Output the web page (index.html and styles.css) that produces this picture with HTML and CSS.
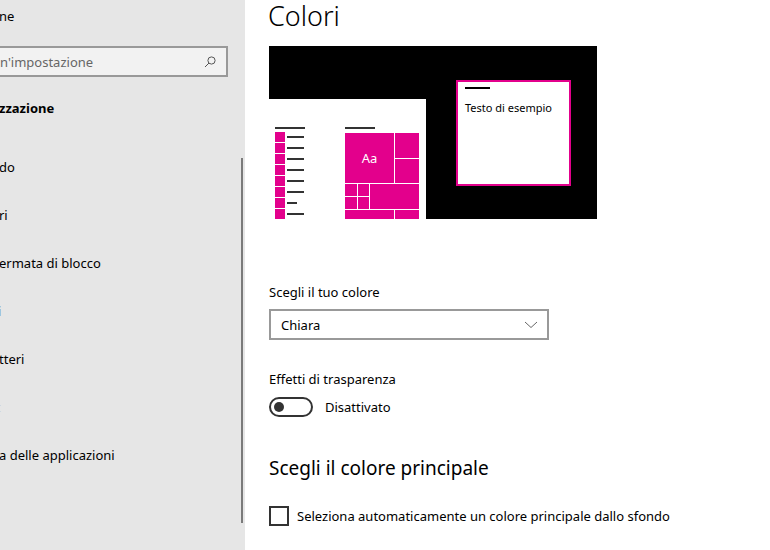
FILE: index.html
```html
<!DOCTYPE html>
<html lang="it">
<head>
<meta charset="utf-8">
<title>Colori</title>
<link rel="stylesheet" href="styles.css">
</head>
<body>
<div class="app">
  <aside class="sidebar">
    <div class="home">ne</div>
    <div class="search">
      <span class="placeholder">n'impostazione</span>
      <svg class="search-icon" width="12" height="12" viewBox="0 0 12 12"><circle cx="7.5" cy="4.5" r="3.6" fill="none" stroke="#555" stroke-width="1"/><line x1="5" y1="7" x2="1" y2="11" stroke="#555" stroke-width="1"/></svg>
    </div>
    <div class="section">zzazione</div>
    <ul class="nav">
      <li>do</li>
      <li>ri</li>
      <li>ermata di blocco</li>
      <li class="dim">i</li>
      <li>tteri</li>
      <li class="faint">t</li>
      <li>a delle applicazioni</li>
    </ul>
    <div class="scrollbar"></div>
  </aside>
  <main class="content">
    <h1 class="title">Colori</h1>
    <div class="preview">
      <svg width="328" height="173" viewBox="0 0 328 173">
        <rect x="0" y="0" width="328" height="173" fill="#000"/>
        <rect x="0" y="53" width="157" height="120" fill="#fff"/>
        <rect x="6" y="81" width="30" height="2" fill="#333"/>
        <g fill="#e3008c">
          <rect x="6" y="86" width="10" height="10"/>
          <rect x="6" y="97" width="10" height="10"/>
          <rect x="6" y="108" width="10" height="10"/>
          <rect x="6" y="119" width="10" height="10"/>
          <rect x="6" y="130" width="10" height="10"/>
          <rect x="6" y="141" width="10" height="10"/>
          <rect x="6" y="152" width="10" height="10"/>
          <rect x="6" y="163" width="10" height="10"/>
        </g>
        <g fill="#333">
          <rect x="18" y="90" width="17" height="2"/>
          <rect x="18" y="101" width="17" height="2"/>
          <rect x="18" y="112" width="17" height="2"/>
          <rect x="18" y="123" width="17" height="2"/>
          <rect x="18" y="134" width="17" height="2"/>
          <rect x="18" y="145" width="17" height="2"/>
          <rect x="18" y="156" width="10" height="2"/>
          <rect x="18" y="167" width="17" height="2"/>
        </g>
        <rect x="76" y="81" width="30" height="2" fill="#333"/>
        <g fill="#e3008c">
          <rect x="76" y="87" width="49" height="50"/>
          <rect x="126" y="87" width="24" height="25"/>
          <rect x="126" y="113" width="24" height="24"/>
          <rect x="76" y="138" width="12" height="12"/>
          <rect x="89" y="138" width="11" height="12"/>
          <rect x="76" y="151" width="12" height="12"/>
          <rect x="89" y="151" width="11" height="12"/>
          <rect x="101" y="138" width="49" height="25"/>
          <rect x="76" y="164" width="49" height="9"/>
          <rect x="126" y="164" width="24" height="9"/>
        </g>
        <text x="100.5" y="117" text-anchor="middle" class="aa">Aa</text>
        <rect x="188" y="35" width="113" height="104" fill="#fff" stroke="#e3008c" stroke-width="2"/>
        <rect x="196" y="41" width="25" height="2" fill="#000"/>
        <text x="196" y="66" class="sample">Testo di esempio</text>
      </svg>
    </div>
    <div class="label label-color">Scegli il tuo colore</div>
    <div class="select">
      <span>Chiara</span>
      <svg class="chevron" width="14" height="8" viewBox="0 0 14 8"><polyline points="1,1 7,6.5 13,1" fill="none" stroke="#666" stroke-width="1"/></svg>
    </div>
    <div class="label label-effects">Effetti di trasparenza</div>
    <div class="toggle-row">
      <span class="toggle"><span class="knob"></span></span>
      <span>Disattivato</span>
    </div>
    <h2 class="subtitle">Scegli il colore principale</h2>
    <div class="check-row">
      <span class="checkbox"></span>
      <span>Seleziona automaticamente un colore principale dallo sfondo</span>
    </div>
  </main>
</div>
</body>
</html>
```

FILE: styles.css
```css
html, body {
  margin: 0;
  padding: 0;
  width: 770px;
  height: 550px;
  overflow: hidden;
  background: #fff;
  font-family: "Noto Sans", "Liberation Sans", sans-serif;
  color: #000;
}

.app {
  display: flex;
  width: 770px;
  height: 550px;
}

.sidebar {
  position: relative;
  width: 245px;
  flex: none;
  background: #e6e6e6;
  overflow: hidden;
  font-size: 13px;
}

.home {
  height: 32px;
  line-height: 32px;
  margin-left: -1px;
}

.search {
  margin-top: 14px;
  margin-left: -4px;
  width: 232px;
  height: 31px;
  box-sizing: border-box;
  border: 2px solid #999;
  background: #f2f2f2;
  display: flex;
  align-items: center;
  justify-content: space-between;
  padding: 0 10px 0 2px;
}

.placeholder {
  color: #666;
  font-size: 13px;
}

.search-icon {
  display: block;
}

.section {
  margin-top: 11px;
  height: 40px;
  line-height: 40px;
  font-weight: 700;
  margin-left: -1px;
}

.nav {
  list-style: none;
  margin: 15px 0 0 0;
  padding: 0;
}

.nav li {
  height: 48px;
  line-height: 48px;
  margin-left: -1px;
}

.nav li.dim {
  color: #777;
  margin-left: -2px;
}

.nav li.faint {
  color: #c8c8c8;
  margin-left: -4px;
}

.scrollbar {
  position: absolute;
  left: 241px;
  top: 158px;
  width: 2px;
  height: 365px;
  background: #7a7a7a;
}

.content {
  flex: 1;
  padding-left: 24px;
  font-size: 13px;
}

.title {
  margin: 0;
  height: 32px;
  line-height: 32px;
  font-size: 27px;
  font-weight: 300;
  margin-left: -1px;
}

.preview {
  margin-top: 14px;
  height: 173px;
}

.preview svg {
  display: block;
}

.aa {
  fill: #fff;
  font-size: 13px;
  font-family: "Noto Sans", "Liberation Sans", sans-serif;
}

.sample {
  fill: #000;
  font-size: 11px;
  font-family: "Noto Sans", "Liberation Sans", sans-serif;
}

.label {
  height: 20px;
  line-height: 20px;
}

.label-color {
  margin-top: 63px;
}

.select {
  margin-top: 7px;
  width: 280px;
  height: 31px;
  box-sizing: border-box;
  border: 2px solid #999;
  display: flex;
  align-items: center;
  justify-content: space-between;
  padding: 0 9px 0 10px;
}

.chevron {
  display: block;
}

.label-effects {
  margin-top: 29px;
}

.toggle-row {
  margin-top: 8px;
  display: flex;
  align-items: center;
  gap: 12px;
}

.toggle {
  width: 44px;
  height: 20px;
  box-sizing: border-box;
  border: 2px solid #333;
  border-radius: 10px;
  display: flex;
  align-items: center;
  padding-left: 3px;
}

.knob {
  width: 10px;
  height: 10px;
  border-radius: 50%;
  background: #333;
}

.subtitle {
  margin: 37px 0 0 0;
  height: 28px;
  line-height: 28px;
  font-size: 19px;
  font-weight: 400;
}

.check-row {
  margin-top: 24px;
  display: flex;
  align-items: center;
  gap: 8px;
}

.checkbox {
  width: 20px;
  height: 20px;
  box-sizing: border-box;
  border: 2px solid #333;
}
```
